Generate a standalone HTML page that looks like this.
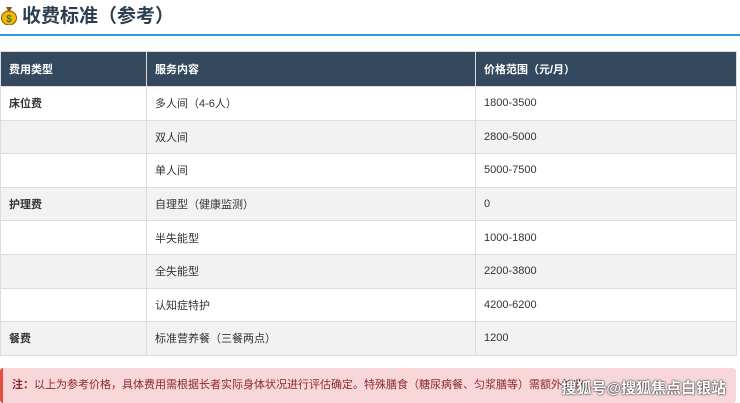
<!DOCTYPE html>
<html><head><meta charset="utf-8"><style>
body{margin:0;width:740px;height:403px;background:#fff;font-family:"Liberation Sans","Noto Sans CJK SC",sans-serif;overflow:hidden;position:relative}
h2{position:absolute;left:0;top:4px;margin:0;font-size:19px;font-weight:bold;color:#2c3e50;line-height:26px}
h2 .ic{display:inline-block;width:18px;height:20px;vertical-align:-3px;margin-right:4px}
.line{position:absolute;left:0;top:34px;width:740px;height:2px;background:#3498db}
table{position:absolute;left:0;top:51px;width:737px;border-collapse:collapse;font-size:11px;color:#333}
th{background:#34495e;color:#fff;text-align:left;font-weight:bold;height:34px;padding:0 0 0 8px;border:1px solid #ddd}
td{height:32.6px;padding:0 0 0 8px;border:1px solid #ddd;border-top:1px solid #e6e6e6}
tr:nth-child(odd) td{background:#f2f2f2}
td.b{font-weight:bold}
.note{position:absolute;left:0;top:368px;width:736px;height:35px;background:#f8d7da;border-left:3px solid #e74c3c;border-radius:3px;font-size:11px;color:#8b2a2a;line-height:35px;padding-left:9px;box-sizing:border-box}
.wm{position:absolute;right:14px;top:377px;font-size:15px;color:#fff;font-weight:bold;text-shadow:0 0 2px #333,0 0 1px #000}
</style></head><body>
<h2><svg class="ic" viewBox="0 0 18 20"><path d="M6 2h6l-2 4h-2z" fill="#8a5a00"/><ellipse cx="9" cy="13" rx="7.5" ry="7" fill="#f5b500" stroke="#8a5a00" stroke-width="1"/><text x="9" y="17" font-size="10" text-anchor="middle" fill="#2a7d2a" font-weight="bold">$</text></svg>收费标准（参考）</h2>
<div class="line"></div>
<table>
<tr><th style="width:137px">费用类型</th><th style="width:320px">服务内容</th><th>价格范围（元/月）</th></tr>
<tr><td class="b">床位费</td><td>多人间（4-6人）</td><td>1800-3500</td></tr>
<tr><td></td><td>双人间</td><td>2800-5000</td></tr>
<tr><td></td><td>单人间</td><td>5000-7500</td></tr>
<tr><td class="b">护理费</td><td>自理型（健康监测）</td><td>0</td></tr>
<tr><td></td><td>半失能型</td><td>1000-1800</td></tr>
<tr><td></td><td>全失能型</td><td>2200-3800</td></tr>
<tr><td></td><td>认知症特护</td><td>4200-6200</td></tr>
<tr><td class="b">餐费</td><td>标准营养餐（三餐两点）</td><td>1200</td></tr>
</table>
<div class="note"><b>注：</b>以上为参考价格，具体费用需根据长者实际身体状况进行评估确定。特殊膳食（糖尿病餐、匀浆膳等）需额外加收</div>
<div class="wm">搜狐号@搜狐焦点白银站</div>
</body></html>
